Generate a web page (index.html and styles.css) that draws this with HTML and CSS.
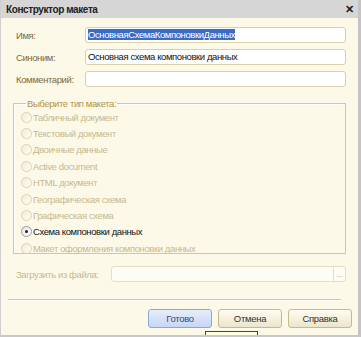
FILE: index.html
```html
<!DOCTYPE html>
<html lang="ru">
<head>
    <meta charset="UTF-8">
    <meta name="viewport" content="width=device-width, initial-scale=1.0">
    <title>Конструктор макета</title>
    <link rel="stylesheet" href="styles.css">
</head>
<body>

    <div class="window">
        <!-- Title bar -->
        <div class="titlebar">
            <span class="title">Конструктор макета</span>
            <span class="close">&#10005;</span>
        </div>

        <div class="content">
            <div class="form-row">
                <label for="name">Имя:</label>
                <div class="field"><span class="selected">ОсновнаяСхемаКомпоновкиДанных</span></div>
            </div>
            <div class="form-row">
                <label for="synonym">Синоним:</label>
                <div class="field">Основная схема компоновки данных</div>
            </div>
            <div class="form-row">
                <label for="comment">Комментарий:</label>
                <div class="field"></div>
            </div>

            <!-- Layout type group -->
            <fieldset class="group">
                <legend>Выберите тип макета:</legend>
                <div class="radio disabled"><span class="dot"></span>Табличный документ</div>
                <div class="radio disabled"><span class="dot"></span>Текстовый документ</div>
                <div class="radio disabled"><span class="dot"></span>Двоичные данные</div>
                <div class="radio disabled"><span class="dot"></span>Active document</div>
                <div class="radio disabled"><span class="dot"></span>HTML документ</div>
                <div class="radio disabled"><span class="dot"></span>Географическая схема</div>
                <div class="radio disabled"><span class="dot"></span>Графическая схема</div>
                <div class="radio checked"><span class="dot"></span>Схема компоновки данных</div>
                <div class="radio disabled"><span class="dot"></span>Макет оформления компоновки данных</div>
            </fieldset>

            <div class="form-row file-row">
                <label>Загрузить из файла:</label>
                <div class="field disabled-field"><span class="browse">...</span></div>
            </div>

            <div class="separator"></div>

            <div class="buttons">
                <button class="btn btn-default">Готово</button>
                <button class="btn">Отмена</button>
                <button class="btn">Справка</button>
            </div>
        </div>

        <div class="tooltip">(Ctrl+Enter)</div>
    </div>

</body>
</html>
```

FILE: styles.css
```css
* {
    box-sizing: border-box;
    margin: 0;
    padding: 0;
}

html, body {
    width: 361px;
    height: 337px;
    overflow: hidden;
}

body {
    font-family: 'Liberation Sans', Arial, sans-serif;
    font-size: 9.5px;
    letter-spacing: -0.4px;
    background-color: #d4d4d4;
}

/* Window frame */
.window {
    position: relative;
    width: 361px;
    height: 337px;
    background-color: #fcf9e9;
    border-left: 1px solid #cfcfcf;
    border-right: 3px solid #c4c4c4;
    border-bottom: 2px solid #c8c8c8;
    overflow: hidden;
}

.titlebar {
    height: 18px;
    background-color: #d6d6d6;
    display: flex;
    align-items: center;
    justify-content: space-between;
    padding: 0 4px 0 5px;
}

.title {
    font-weight: bold;
    font-size: 10px;
    letter-spacing: -0.4px;
    color: #222;
}

.close {
    font-weight: bold;
    font-size: 11px;
    color: #222;
}

.content {
    padding: 9px 12px 0 15px;
}

/* Label + field rows */
.form-row {
    display: flex;
    align-items: center;
    height: 16px;
    margin-bottom: 6px;
}

.form-row label {
    width: 69px;
    color: #7c6a3c;
}

.field {
    flex: 1;
    height: 16px;
    background-color: #fff;
    border: 1px solid #d9cfa9;
    border-radius: 3px;
    padding: 0 2px;
    line-height: 14px;
    color: #111;
    white-space: nowrap;
    overflow: hidden;
}

.selected {
    background-color: #3a6bc6;
    color: #fff;
}

/* Group box */
.group {
    margin: 11px 0 0 -3px;
    border: 1px solid #d2c89e;
    box-shadow: inset 1px 1px 0 #fff;
    padding: 0 6px 2px 7px;
    height: 156px;
}

.group legend {
    color: #b39441;
    padding: 0 1px;
    margin-left: 5px;
}

.radio {
    display: flex;
    align-items: center;
    height: 16.4px;
    color: #c7b98c;
}

.radio.checked {
    color: #111;
}

.dot {
    width: 11px;
    height: 11px;
    border-radius: 50%;
    border: 1px solid #dcd3b4;
    background: linear-gradient(135deg, #efeadb, #fffdf5);
    margin-right: 1px;
    position: relative;
}

.radio.checked .dot {
    border-color: #9b9b9b;
    background: linear-gradient(135deg, #e4e4e4, #fff);
}

.radio.checked .dot::after {
    content: "";
    position: absolute;
    left: 3px;
    top: 3px;
    width: 3px;
    height: 3px;
    border-radius: 50%;
    background-color: #222;
}

/* File row */
.file-row {
    margin-top: 12px;
}

.file-row label {
    width: 95px;
    white-space: nowrap;
    color: #c7b98c;
}

.disabled-field {
    background-color: #fdfcf5;
    border-color: #e6dfc5;
    display: flex;
    justify-content: flex-end;
    padding: 0;
}

.browse {
    width: 12px;
    border-left: 1px solid #e6dfc5;
    color: #c7b98c;
    font-size: 9px;
    text-align: center;
}

.separator {
    margin: 17px 5px 0 -8px;
    height: 2px;
    border-top: 1px solid #d2c89e;
    border-bottom: 1px solid #fff;
}

/* Buttons */
.buttons {
    display: flex;
    justify-content: flex-end;
    gap: 6px;
    margin-top: 8px;
    margin-right: -6px;
}

.btn {
    width: 64px;
    height: 19px;
    font-family: 'Liberation Sans', Arial, sans-serif;
    font-size: 9.5px;
    letter-spacing: -0.3px;
    color: #333;
    border: 1px solid #c5b98f;
    border-radius: 3px;
    background: linear-gradient(#fffdf3, #ece5cc);
}

.btn-default {
    border-color: #8ea6d6;
    background: linear-gradient(#e6eefc, #c6d6f6);
    color: #3c4a6e;
}

.tooltip {
    position: absolute;
    left: 204px;
    top: 331px;
    padding: 1px 3px;
    background-color: #ffffe1;
    border: 1px solid #444;
    color: #111;
}
```
